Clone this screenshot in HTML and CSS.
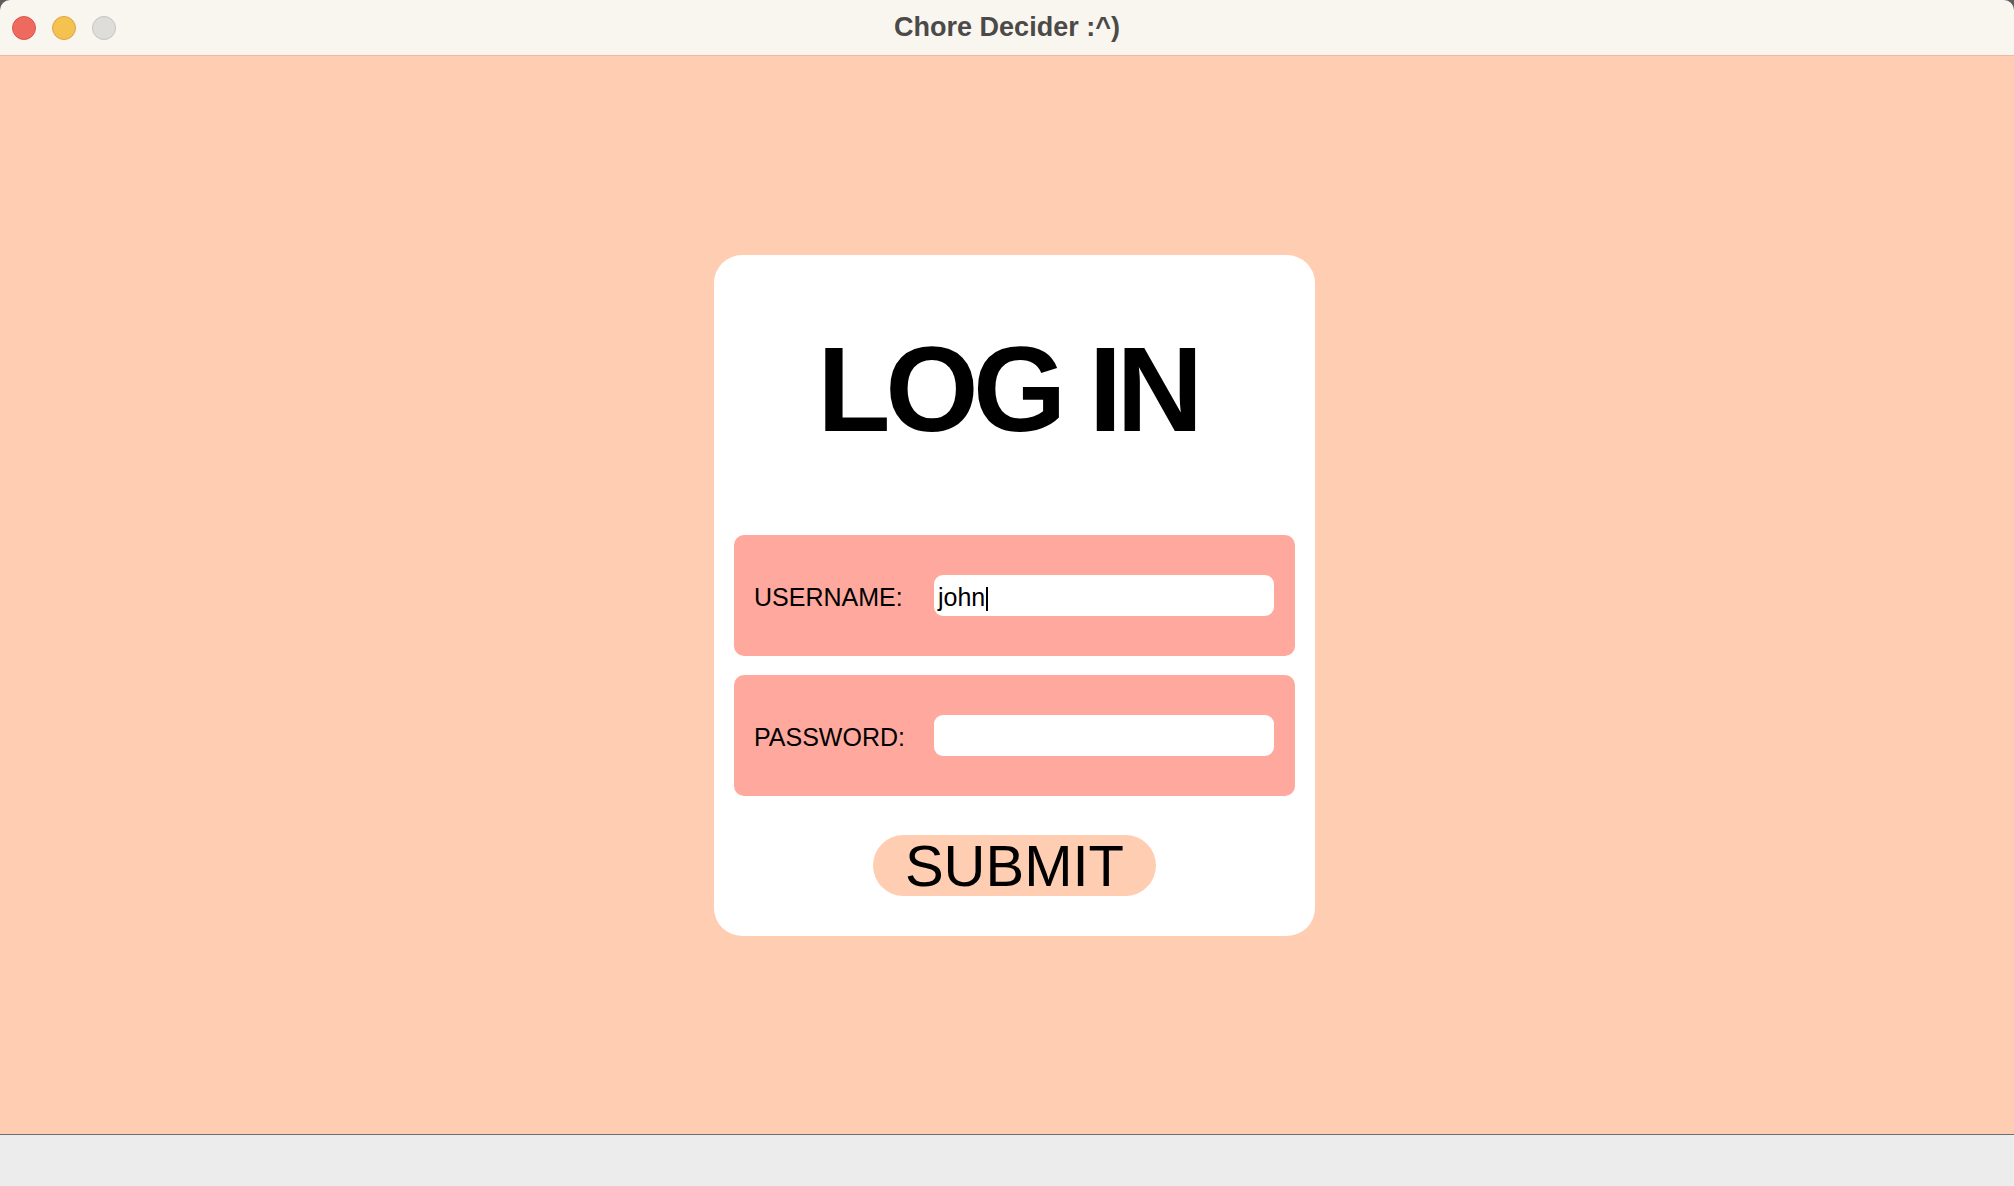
FILE: index.html
```html
<!DOCTYPE html>
<html lang="en">
<head>
<meta charset="utf-8">
<title>Chore Decider :^)</title>
<link rel="stylesheet" href="styles.css">
</head>
<body>
<div class="window">
  <header class="titlebar">
    <div class="lights">
      <span class="light red"></span>
      <span class="light yellow"></span>
      <span class="light grey"></span>
    </div>
    <div class="title">Chore Decider :^)</div>
  </header>
  <main class="content">
    <section class="card">
      <h1 class="heading">LOG IN</h1>
      <div class="row">
        <label class="label">USERNAME:</label>
        <div class="input"><span class="value">john</span><span class="caret"></span></div>
      </div>
      <div class="row">
        <label class="label">PASSWORD:</label>
        <div class="input"></div>
      </div>
      <div class="actions">
        <button class="submit" type="button">SUBMIT</button>
      </div>
    </section>
  </main>
  <footer class="statusbar"></footer>
</div>
</body>
</html>
```

FILE: styles.css
```css
html, body {
  margin: 0;
  padding: 0;
  background: #5e5e5e;
}

.window {
  width: 2014px;
  height: 1186px;
  display: flex;
  flex-direction: column;
  border-radius: 10px 10px 0 0;
  overflow: hidden;
  font-family: "Liberation Sans", Arial, sans-serif;
}

.titlebar {
  height: 55px;
  flex: 0 0 55px;
  background: #f9f6f0;
  border-bottom: 1px solid #efb9a0;
  display: flex;
  align-items: center;
  position: relative;
}

.lights {
  display: flex;
  gap: 16px;
  padding-left: 12px;
  padding-top: 1px;
}

.light {
  width: 22px;
  height: 22px;
  border-radius: 50%;
  display: block;
}

.red { background: #ee6a5f; border: 1px solid #d65a50; }
.yellow { background: #f5c251; border: 1px solid #d9a644; }
.grey { background: #dfddd9; border: 1px solid #c6c4c0; }

.title {
  position: absolute;
  left: 0;
  right: 0;
  top: 11px;
  text-align: center;
  font-size: 27px;
  font-weight: bold;
  color: #4b4a48;
  line-height: 32px;
}

.content {
  flex: 1 1 auto;
  background: #ffcdb2;
  display: flex;
  align-items: center;
  justify-content: center;
  padding-left: 15px;
}

.card {
  width: 601px;
  height: 681px;
  box-sizing: border-box;
  background: #ffffff;
  border-radius: 28px;
  padding: 74px 20px 40px 20px;
  display: flex;
  flex-direction: column;
}

.heading {
  margin: 0 0 86px 0;
  height: 120px;
  font-size: 120px;
  line-height: 120px;
  font-weight: bold;
  letter-spacing: -5.5px;
  text-align: center;
  color: #000;
  padding-right: 14px;
}

.row {
  height: 121px;
  background: #ffa99e;
  border-radius: 10px;
  display: flex;
  align-items: center;
  padding: 0 21px 0 20px;
  box-sizing: border-box;
}

.row + .row {
  margin-top: 19px;
}

.label {
  width: 180px;
  flex: 0 0 180px;
  font-size: 25px;
  color: #000;
  position: relative;
  top: 2px;
}

.input {
  flex: 1 1 auto;
  height: 41px;
  background: #ffffff;
  border-radius: 9px;
  display: flex;
  align-items: center;
  padding-left: 4px;
  font-size: 25px;
  color: #000;
}

.value {
  position: relative;
  top: 2px;
}

.caret {
  display: inline-block;
  width: 2px;
  height: 24px;
  background: #000;
  margin-left: 1px;
  position: relative;
  top: 4px;
}

.actions {
  margin-top: 39px;
  display: flex;
  justify-content: center;
}

.submit {
  width: 283px;
  height: 61px;
  border: none;
  border-radius: 31px;
  background: #ffcdb2;
  font-family: "Liberation Sans", Arial, sans-serif;
  font-size: 58px;
  line-height: 61px;
  color: #000;
  padding: 0;
  cursor: pointer;
}

.statusbar {
  flex: 0 0 51px;
  height: 51px;
  background: #ececec;
  border-top: 1px solid #6f6f6f;
}
```
